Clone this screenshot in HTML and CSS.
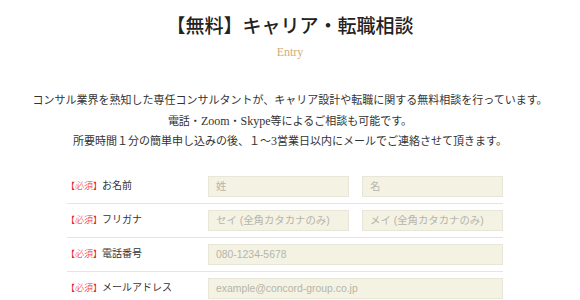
FILE: index.html
```html
<!DOCTYPE html>
<html lang="ja">
<head>
<meta charset="utf-8">
<title>Entry</title>
<link rel="stylesheet" href="styles.css">
</head>
<body>
<header class="head">
  <h1 class="title">【無料】キャリア・転職相談</h1>
  <p class="sub">Entry</p>
</header>
<div class="lead">
  <p>コンサル業界を熟知した専任コンサルタントが、キャリア設計や転職に関する無料相談を行っています。</p>
  <p>電話・<span class="lat">Zoom</span>・<span class="lat">Skype</span>等によるご相談も可能です。</p>
  <p>所要時間１分の簡単申し込みの後、１〜<span class="lat">3</span>営業日以内にメールでご連絡させて頂きます。</p>
</div>
<form class="form">
  <div class="row">
    <label class="label"><span class="req">【必須】</span>お名前</label>
    <div class="fields two">
      <input class="input" type="text" placeholder="姓">
      <input class="input" type="text" placeholder="名">
    </div>
  </div>
  <div class="row">
    <label class="label"><span class="req">【必須】</span>フリガナ</label>
    <div class="fields two">
      <input class="input" type="text" placeholder="セイ (全角カタカナのみ)">
      <input class="input" type="text" placeholder="メイ (全角カタカナのみ)">
    </div>
  </div>
  <div class="row">
    <label class="label"><span class="req">【必須】</span>電話番号</label>
    <div class="fields">
      <input class="input" type="text" placeholder="080-1234-5678">
    </div>
  </div>
  <div class="row">
    <label class="label"><span class="req">【必須】</span>メールアドレス</label>
    <div class="fields">
      <input class="input" type="text" placeholder="example@concord-group.co.jp">
    </div>
  </div>
</form>
</body>
</html>
```

FILE: styles.css
```css
* { box-sizing: border-box; }
html, body { margin: 0; padding: 0; background: #fff; }
body {
  width: 580px;
  overflow: hidden;
  font-family: "Liberation Serif", "Noto Sans CJK JP", serif;
  color: #333;
}
.head { text-align: center; padding-top: 13px; }
.title {
  margin: 0;
  font-size: 19px;
  line-height: 27px;
  font-weight: 500;
  color: #222;
  font-family: "Liberation Serif", "Noto Sans CJK JP", serif;
}
.sub {
  margin: 4px 0 0;
  font-size: 12px;
  line-height: 16px;
  color: #d2ad76;
}
.lead {
  margin-top: 30px;
  text-align: center;
  font-size: 11px;
  line-height: 20.5px;
  color: #333;
}
.lead p { margin: 0; }
.lat { font-size: 12px; }
.form {
  width: 436px;
  margin: 18px 0 0 67px;
  font-family: "Liberation Sans", "Noto Sans CJK JP", sans-serif;
}
.row {
  display: grid;
  grid-template-columns: 141px 1fr;
  align-items: center;
  padding: 6px 0;
  border-bottom: 1px solid #e4e4e4;
}
.label {
  font-size: 10px;
  line-height: 14px;
  color: #333;
  margin-left: -1px;
}
.req { color: #e8231f; font-size: 9px; font-weight: 300; }
.fields { display: grid; grid-template-columns: 1fr; }
.fields.two { grid-template-columns: 1fr 1fr; column-gap: 13px; }
.input {
  width: 100%;
  height: 21px;
  margin: 0;
  padding: 0 7px;
  border: 1px solid #e8e6d8;
  background: #f4f2e2;
  font-family: "Liberation Sans", "Noto Sans CJK JP", sans-serif;
  font-size: 10.4px;
  color: #333;
  outline: none;
  border-radius: 0;
}
.input::placeholder { color: #b5b5ab; }
```
